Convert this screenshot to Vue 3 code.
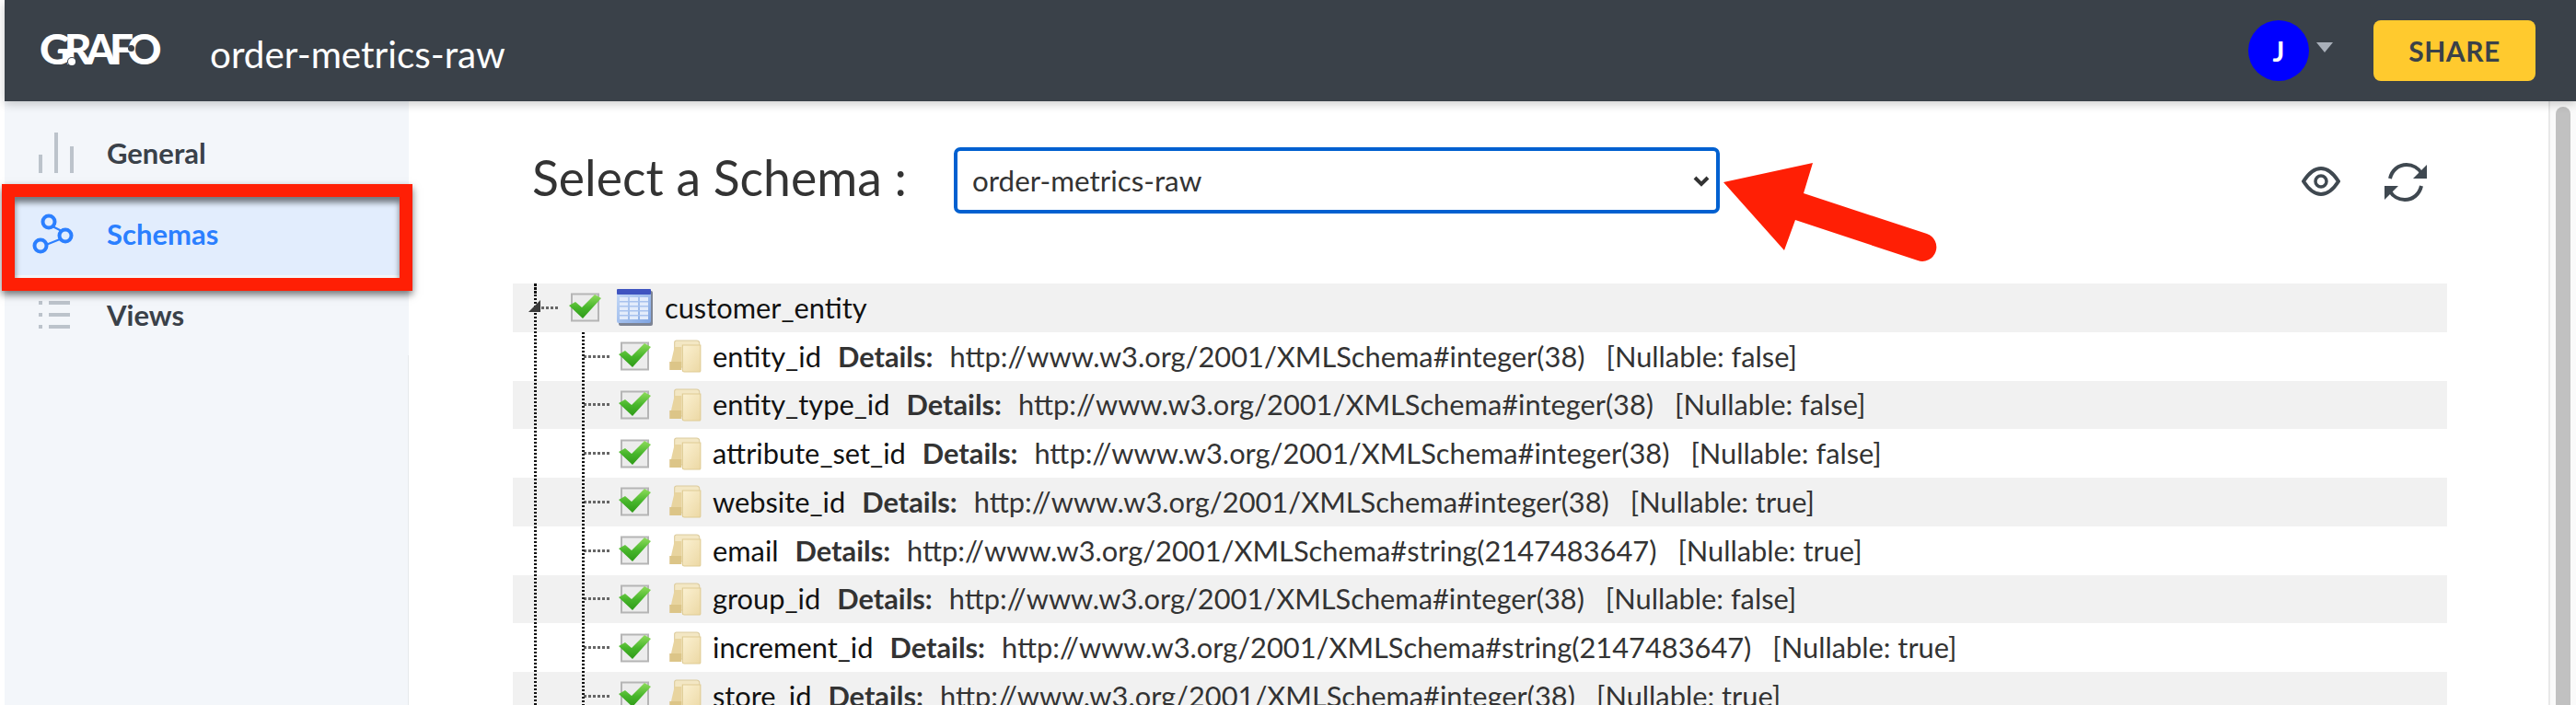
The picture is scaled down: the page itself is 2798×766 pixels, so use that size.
<script setup>
const rows = [
  { name: 'entity_id', url: 'http://www.w3.org/2001/XMLSchema#integer(38)', nullable: 'false' },
  { name: 'entity_type_id', url: 'http://www.w3.org/2001/XMLSchema#integer(38)', nullable: 'false' },
  { name: 'attribute_set_id', url: 'http://www.w3.org/2001/XMLSchema#integer(38)', nullable: 'false' },
  { name: 'website_id', url: 'http://www.w3.org/2001/XMLSchema#integer(38)', nullable: 'true' },
  { name: 'email', url: 'http://www.w3.org/2001/XMLSchema#string(2147483647)', nullable: 'true' },
  { name: 'group_id', url: 'http://www.w3.org/2001/XMLSchema#integer(38)', nullable: 'false' },
  { name: 'increment_id', url: 'http://www.w3.org/2001/XMLSchema#string(2147483647)', nullable: 'true' },
  { name: 'store_id', url: 'http://www.w3.org/2001/XMLSchema#integer(38)', nullable: 'true' },
]
</script>

<template>
  <div class="page">
    <svg class="defs" width="0" height="0">
      <defs>
        <linearGradient id="chk" x1="0" y1="0" x2="0" y2="1">
          <stop offset="0" stop-color="#8fdc5c" />
          <stop offset="0.55" stop-color="#46b52a" />
          <stop offset="1" stop-color="#2f9a18" />
        </linearGradient>
        <linearGradient id="tbl" x1="0" y1="0" x2="1" y2="1">
          <stop offset="0" stop-color="#c9dcf8" />
          <stop offset="1" stop-color="#7fa4e2" />
        </linearGradient>
        <linearGradient id="col" x1="0" y1="0" x2="1" y2="1">
          <stop offset="0" stop-color="#fbf1d2" />
          <stop offset="1" stop-color="#ecd8a4" />
        </linearGradient>
      </defs>
    </svg>

    <header class="topbar">
      <div class="logo">
        GRAFO
        <span class="logo-dot dot-g"></span>
        <span class="logo-dot dot-r"></span>
        <span class="logo-dot dot-f"></span>
      </div>
      <div class="title">order-metrics-raw</div>
      <div class="spacer"></div>
      <div class="avatar">J</div>
      <div class="caret"></div>
      <button class="share">SHARE</button>
    </header>

    <div class="body">
      <aside class="sidebar">
        <nav class="nav">
          <div class="nav-item">
            <svg class="nav-icon" width="60" height="50" viewBox="0 0 60 50">
              <g fill="#bcc3cb">
                <rect x="7" y="26" width="4" height="20" />
                <rect x="24" y="2" width="4" height="44" />
                <rect x="41" y="17" width="4" height="29" />
              </g>
            </svg>
            General
          </div>
          <div class="nav-item active">
            <svg class="nav-icon" width="60" height="50" viewBox="0 0 60 50">
              <g fill="none" stroke="#2b7fff">
                <path d="M22 16 L32 21 M30 30 L15 36" stroke-width="2" />
                <g stroke-width="4">
                  <circle cx="18" cy="11" r="6.5" />
                  <circle cx="36" cy="26" r="6.5" />
                  <circle cx="9" cy="37" r="6.5" />
                </g>
              </g>
            </svg>
            Schemas
          </div>
          <div class="nav-item">
            <svg class="nav-icon" width="60" height="50" viewBox="0 0 60 50">
              <g fill="#bcc3cb">
                <rect x="7" y="9" width="4" height="4" />
                <rect x="18" y="9" width="23" height="4" />
                <rect x="7" y="22" width="4" height="4" />
                <rect x="18" y="22" width="23" height="4" />
                <rect x="7" y="35" width="4" height="4" />
                <rect x="18" y="35" width="23" height="4" />
              </g>
            </svg>
            Views
          </div>
        </nav>
      </aside>

      <main class="main">
        <div class="schema-bar">
          <h1 class="heading">Select a Schema :</h1>
          <div class="select-wrap">
            <select class="schema-select">
              <option>order-metrics-raw</option>
            </select>
            <svg class="chevron" width="18" height="12" viewBox="0 0 18 12" fill="none">
              <path d="M2 2 L9 9 L16 2" stroke="#333" stroke-width="4" />
            </svg>
          </div>
          <div class="spacer"></div>
          <svg class="tool-eye" width="42" height="34" viewBox="0 0 42 34" fill="none" stroke="#3f4850">
            <path d="M2 17 C9 6 15 3 21 3 C27 3 33 6 40 17 C33 28 27 31 21 31 C15 31 9 28 2 17 Z" stroke-width="4" />
            <circle cx="21" cy="17" r="6" stroke-width="3.5" />
          </svg>
          <svg class="tool-sync" width="46" height="44" viewBox="0 0 46 44" fill="none">
            <path d="M6 18 C8 9 15 3 24 3 C31 3 37 7 40 12" stroke="#3f4850" stroke-width="4" />
            <path d="M40 26 C38 35 31 41 22 41 C15 41 9 37 6 32" stroke="#3f4850" stroke-width="4" />
            <path d="M46 3 V18 H31 Z" fill="#3f4850" />
            <path d="M0 41 V26 H15 Z" fill="#3f4850" />
          </svg>
        </div>

        <div class="tree">
          <div class="guide guide-root"></div>
          <div class="guide guide-child"></div>

          <div class="row row-root">
            <span class="expander"></span>
            <span class="dots dots-root"></span>
            <svg class="check" width="36" height="32" viewBox="0 0 36 32">
              <rect x="3" y="1.5" width="29" height="29" fill="#ececec" stroke="#b5b5b5" stroke-width="2" />
              <path d="M0 14 L7 10 L14 16 L28 2 L35 6 L15 28 Z" fill="url(#chk)" />
            </svg>
            <svg class="table" width="40" height="40" viewBox="0 0 40 40">
              <rect x="2" y="2" width="37" height="38" rx="2" fill="#7d8494" />
              <rect x="0" y="0" width="37" height="37" rx="2" fill="url(#tbl)" />
              <rect x="0" y="0" width="37" height="6" rx="1" fill="#3f54c0" />
              <g fill="#e3ecfb">
                <rect x="3" y="9" width="9" height="24" />
                <rect x="14" y="9" width="9" height="24" />
                <rect x="25" y="9" width="9" height="24" />
              </g>
              <g fill="#a8c2ee">
                <rect x="3" y="13" width="31" height="1.5" />
                <rect x="3" y="18" width="31" height="1.5" />
                <rect x="3" y="23" width="31" height="1.5" />
                <rect x="3" y="28" width="31" height="1.5" />
              </g>
            </svg>
            <span class="name">customer_entity</span>
          </div>

          <div v-for="row in rows" :key="row.name" class="row row-child">
            <span class="dots dots-child"></span>
            <svg class="check" width="36" height="32" viewBox="0 0 36 32">
              <rect x="3" y="1.5" width="29" height="29" fill="#ececec" stroke="#b5b5b5" stroke-width="2" />
              <path d="M0 14 L7 10 L14 16 L28 2 L35 6 L15 28 Z" fill="url(#chk)" />
            </svg>
            <svg class="column" width="39" height="36" viewBox="0 0 36 36" preserveAspectRatio="none">
              <path d="M8 3 Q8 1 10 1 H30 Q33 1 33 4 V30 H8 Z" fill="#f3e7c4" stroke="#dccb9d" stroke-width="1" />
              <path d="M5 22 L8 8 H15 V28 H4 Z" fill="#e8d49f" />
              <path d="M16 6 H34 V34 Q34 35 33 35 H18 Q16 35 16 33 Z" fill="url(#col)" stroke="#dfcb93" stroke-width="1" />
              <path d="M3 24 H15 V33 H3 Z" fill="#dcc588" />
            </svg>
            <span class="name">{{ row.name }}</span>
            <b class="details">Details:</b>
            <span class="url">{{ row.url }}</span>
            <span class="nullable">[Nullable: {{ row.nullable }}]</span>
          </div>
        </div>
      </main>

      <div class="scrollbar"><div class="thumb"></div></div>
    </div>

    <div class="marker-box"></div>
    <svg class="marker-arrow" width="250" height="130" viewBox="1860 170 250 130">
      <path d="M1872 198 L1969 177 L1959 210 L2093 254 A15 15 0 0 1 2083 283 L1950 239 L1938 272 Z" fill="#ff1f05" />
    </svg>
  </div>
</template>

<style>
html, body { margin: 0; background: #fff; overflow: hidden; }
</style>

<style scoped>
.page {
  position: relative;
  width: 2798px;
  height: 766px;
  overflow: hidden;
  padding-left: 5px;
  box-sizing: border-box;
  font-family: Lato, "Liberation Sans", sans-serif;
  display: flex;
  flex-direction: column;
  background: #fff;
}
.defs { position: absolute; }
.topbar {
  height: 110px;
  flex: none;
  background: #3a4149;
  display: flex;
  align-items: center;
  position: relative;
  z-index: 2;
  box-shadow: 0 3px 10px rgba(0, 0, 0, 0.2);
}
.logo {
  margin-left: 38px;
  width: 145px;
  font-size: 46px;
  font-weight: 900;
  letter-spacing: -6.5px;
  color: #fff;
  line-height: 1;
  position: relative;
  top: -2px;
}
.logo-dot {
  position: absolute;
  border-radius: 50%;
  width: 7px;
  height: 7px;
  background: #3a4149;
}
.dot-g { left: 14px; top: 18px; }
.dot-r { left: 31px; top: 33px; width: 8px; height: 8px; background: #fff; box-shadow: 0 0 0 1px #3a4149; }
.dot-f { left: 96px; top: 19px; }
.title {
  margin-left: 40px;
  font-size: 40.4px;
  color: #fff;
  position: relative;
  top: 3px;
}
.spacer { flex: 1; }
.avatar {
  width: 66px;
  height: 66px;
  border-radius: 50%;
  background: #0000ff;
  color: #fff;
  font-weight: 700;
  font-size: 30px;
  display: flex;
  align-items: center;
  justify-content: center;
}
.caret {
  margin-left: 8px;
  margin-bottom: 8px;
  border-left: 9px solid transparent;
  border-right: 9px solid transparent;
  border-top: 11px solid #a9b0ba;
}
.share {
  margin-left: 44px;
  margin-right: 44px;
  width: 176px;
  height: 66px;
  border: 0;
  border-radius: 8px;
  background: #ffca2e;
  color: #3a4149;
  font-family: inherit;
  font-size: 30px;
  font-weight: 700;
  letter-spacing: 0.5px;
}
.body {
  flex: 1;
  display: flex;
  min-height: 0;
}
.sidebar {
  width: 439px;
  flex: none;
  background: #f3f6fa;
  position: relative;
}
.sidebar::after {
  content: "";
  position: absolute;
  right: 0;
  top: 276px;
  bottom: 0;
  width: 1px;
  background: #e6e9ec;
}
.nav { padding-top: 13px; }
.nav-item {
  height: 88px;
  box-sizing: border-box;
  padding-bottom: 2px;
  display: flex;
  align-items: center;
  padding-left: 30px;
  font-size: 31px;
  font-weight: 700;
  color: #3a4149;
}
.nav-item.active {
  background: #e2edfd;
  color: #2b7fff;
}
.nav-icon { margin-right: 21px; margin-top: 2px; flex: none; }
.main {
  flex: 1;
  padding-left: 113px;
  min-width: 0;
}
.schema-bar {
  height: 198px;
  display: flex;
  align-items: flex-start;
  padding-top: 50px;
  box-sizing: border-box;
  width: 2101px;
}
.heading {
  margin: 0 0 0 21px;
  width: 458px;
  height: 72px;
  line-height: 65px;
  font-size: 53.5px;
  font-weight: 400;
  color: #333;
  white-space: nowrap;
}
.select-wrap {
  position: relative;
  width: 832px;
  height: 72px;
}
.schema-select {
  display: block;
  width: 100%;
  height: 100%;
  box-sizing: border-box;
  border: 4px solid #0060d0;
  border-radius: 7px;
  background: #fff;
  padding: 0 16px;
  font-family: inherit;
  font-size: 31.4px;
  color: #333;
  outline: none;
  appearance: none;
  -webkit-appearance: none;
}
.chevron {
  position: absolute;
  right: 11px;
  top: 31px;
}
.tool-eye { margin-top: 20px; }
.tool-sync { margin-left: 48px; margin-top: 16px; margin-right: 22px; }
.tree {
  position: relative;
  width: 2101px;
}
.row {
  height: 52.75px;
  display: flex;
  align-items: center;
  font-size: 30.8px;
  color: #333;
  white-space: nowrap;
}
.row:nth-of-type(odd) { background: #f1f1f1; }
.guide {
  position: absolute;
  width: 3px;
  bottom: 0;
  z-index: 1;
  background: repeating-linear-gradient(to bottom, #111 0 2.5px, transparent 2.5px 4px);
}
.guide-root { left: 23px; top: 0; }
.guide-child { left: 75px; top: 53px; }
.row-root { padding-left: 17px; }
.row-child { padding-left: 77px; }
.expander {
  position: relative;
  z-index: 2;
  width: 0;
  height: 0;
  border-left: 13px solid transparent;
  border-bottom: 13px solid #3a3a3a;
  margin-top: -3px;
}
.dots {
  height: 3px;
  flex: none;
  background: repeating-linear-gradient(to right, #666 0 3px, transparent 3px 5px);
}
.dots-root { width: 20px; margin-left: 1px; margin-right: 10px; }
.dots-child { width: 29px; margin-right: 9px; }
.check { flex: none; }
.table { margin-left: 16px; margin-right: 12px; flex: none; }
.column { margin-left: 16px; margin-right: 11px; flex: none; }
.name { color: #111; }
.details { margin-left: 18px; font-weight: 700; color: #333; }
.url { margin-left: 18px; color: #333; }
.nullable { margin-left: 23px; color: #333; }
.scrollbar {
  width: 30px;
  flex: none;
  box-sizing: border-box;
  border-left: 2px solid #e8e8e8;
  background: #fafafa;
  padding: 6px 6px 0 6px;
}
.thumb {
  height: 100%;
  background: #c1c1c1;
  border-radius: 8px 8px 0 0;
}
.marker-box {
  position: absolute;
  left: 2px;
  top: 200px;
  width: 446px;
  height: 116px;
  box-sizing: border-box;
  border: 14px solid #ff1f05;
  z-index: 3;
  box-shadow: 0 4px 8px rgba(0, 0, 0, 0.55), inset 0 6px 6px rgba(0, 0, 0, 0.5);
}
.marker-arrow {
  position: absolute;
  left: 1860px;
  top: 170px;
  z-index: 3;
}
</style>
